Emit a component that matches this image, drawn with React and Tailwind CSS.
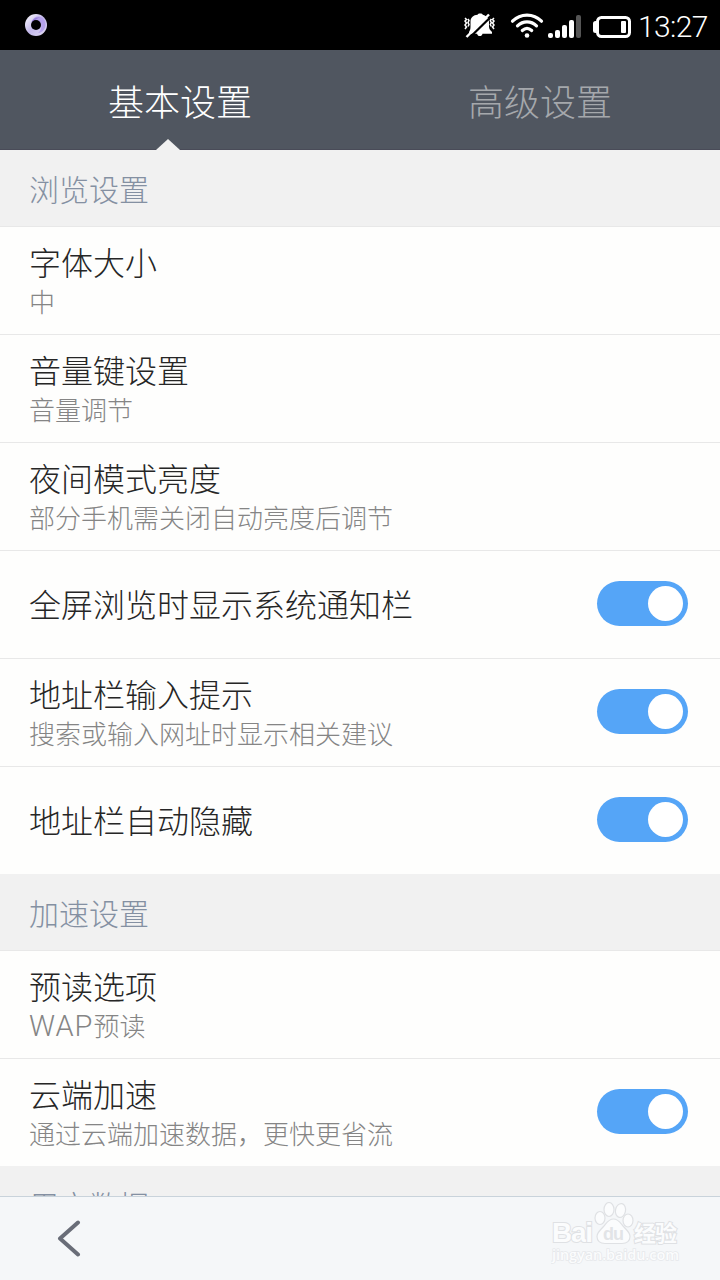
const SECTIONS = [
  {
    title: "浏览设置",
    items: [
      { title: "字体大小", desc: "中" },
      { title: "音量键设置", desc: "音量调节" },
      { title: "夜间模式亮度", desc: "部分手机需关闭自动亮度后调节" },
      { title: "全屏浏览时显示系统通知栏", toggle: true },
      { title: "地址栏输入提示", desc: "搜索或输入网址时显示相关建议", toggle: true },
      { title: "地址栏自动隐藏", toggle: true },
    ],
  },
  {
    title: "加速设置",
    items: [
      {
        title: "预读选项",
        desc: (
          <>
            <span className="font-[Roboto,sans-serif] text-[29px] tracking-[1px]">WAP</span>预读
          </>
        ),
      },
      { title: "云端加速", desc: "通过云端加速数据，更快更省流", toggle: true },
    ],
  },
  { title: "用户数据", items: [] },
];

function StatusBar() {
  return (
    <div className="flex h-[50px] shrink-0 items-center bg-black pl-[25px] text-white">
      <svg width="22" height="22" viewBox="0 0 22 22">
        <defs>
          <linearGradient id="ring" x1="0" y1="0" x2="1" y2="1">
            <stop offset="0" stopColor="#ffffff" />
            <stop offset="0.5" stopColor="#c3b8ea" />
            <stop offset="1" stopColor="#e2dcf4" />
          </linearGradient>
        </defs>
        <circle cx="11" cy="11" r="11" fill="url(#ring)" />
        <path d="M6.500 8C8 3 13 1 17 3.500c4 3 4.500 9 2 12-1.500 2-4 3.500-6 3.500 4-3 4-8 2-11-2-2-6-2.500-8.500 0z" fill="#b5a2ec" />
        <path d="M6.300 8.500C7.500 5 11 3 15 3.500c-2 .5-4 1.500-5 3.500z" fill="#9a82dd" />
        <circle cx="11" cy="11" r="5" fill="#000" />
      </svg>
      <div className="ml-auto flex items-center">
        {/* muted bell */}
        <svg width="32" height="26" viewBox="0 0 32 26">
          <path d="M16 1.500c1.600 0 2.500.5 2.800 1.300C23 4 25 6.500 25 10v4.500c0 2.500 1.500 4 3 5.500v1.700H18.500c-.3 1.500-1.300 2.300-2.700 2.300s-2.400-.8-2.700-2.300H5V20c1-1.500 1.500-3 1.500-5.500V9.500c0-4 3-6.500 7-6.700C14 2 14.700 1.500 16 1.500z" fill="#fff" />
          <path d="M4 27.200 27.500 4.200" stroke="#000" strokeWidth="2.200" />
          <path d="M2.500 25 25 2.500" stroke="#fff" strokeWidth="2.400" />
          <path d="M1 6l1.500 1.500L1 9l1.500 2L1 13l1.500 2L1 17M4 7l1 1.500L4 10.500l1 2-1 2M30 6l-1.500 1.500L30 9l-1.500 2 1.500 2-1.500 2 1.500 2M27.300 7l-1 1.500 1 2-1 2 1 2" stroke="#fff" strokeWidth="1.500" fill="none" />
        </svg>
        <svg className="ml-[14px]" width="34" height="26" viewBox="0 0 34 26" fill="none" stroke="#fff" strokeWidth="3.200" strokeLinecap="round">
          <path d="M2.500 9.200C10.500 1 23.500 1 31.500 9.200" />
          <path d="M7.500 13.900c5.500-5.300 13.500-5.300 19 0" />
          <path d="M12.300 18.500c2.900-2.600 6.500-2.600 9.400 0" />
          <circle cx="17" cy="23.500" r="2.300" fill="#fff" stroke="none" />
        </svg>
        <svg className="mt-[3px] ml-[4px]" width="34" height="24" viewBox="0 0 34 24" fill="#fff">
          <rect x="0" y="18" width="5" height="5" rx="2" />
          <rect x="7" y="15" width="5" height="8" rx="2" />
          <rect x="14" y="10" width="5" height="13" rx="2" />
          <rect x="21" y="5" width="5" height="18" rx="2" />
          <rect x="28" y="0" width="5" height="23" rx="2" fill="#555" />
        </svg>
        <svg className="mt-[4px] ml-[11px]" width="38" height="22" viewBox="0 0 38 22">
          <rect x="4.500" y="1.500" width="32" height="19" rx="4" fill="none" stroke="#fff" strokeWidth="3" />
          <rect x="0" y="5" width="5" height="12" rx="2.500" fill="#fff" />
          <rect x="28" y="5" width="5" height="12" rx="1" fill="#fff" />
        </svg>
        <span className="mt-[4px] ml-[7px] w-[82px] font-[Roboto,sans-serif] text-[30px] leading-none font-light tracking-[-0.6px]">13:27</span>
      </div>
    </div>
  );
}

function Tabs() {
  return (
    <div className="flex h-[100px] shrink-0 border-b border-[#494b58] bg-[#505660] text-[36px] leading-[100px]">
      <div className="relative w-1/2 text-center text-white">
        基本设置
        <svg className="absolute -bottom-px left-[156px]" width="24" height="11" viewBox="0 0 24 11">
          <path d="M0 11 12 0l12 11z" fill="#f1f1f1" />
        </svg>
      </div>
      <div className="w-1/2 text-center text-[#a5a8ac]">高级设置</div>
    </div>
  );
}

function Toggle() {
  return (
    <div className="flex h-[45px] w-[91px] items-center justify-end rounded-full bg-[#55a5f7] pr-[5px]">
      <div className="size-[35px] rounded-full bg-white" />
    </div>
  );
}

function Row({ title, desc, toggle }) {
  return (
    <div className="flex h-[108px] items-center justify-between border-b border-[#e8e8e8] bg-[#fefefd] pr-[32px] pb-[2px] pl-[29px] last:h-[107px] last:border-b-0">
      <div>
        <div className="pb-[2px] text-[32px] leading-[40px] text-[#262626]">{title}</div>
        {desc && <div className="h-[36px] text-[26px] leading-[36px] text-[#858585]">{desc}</div>}
      </div>
      {toggle && <Toggle />}
    </div>
  );
}

function Watermark() {
  return (
    <svg className="mb-[8px]" width="130" height="66" viewBox="0 0 130 66" fill="#fbfcfd" stroke="#dfe1e4" strokeWidth="1.200">
      <g fontWeight="700" paintOrder="stroke" strokeWidth="2">
        <text x="1" y="40" fontSize="28" textLength="41" fontFamily="Liberation Sans">Bai</text>
        <text x="83" y="39" fontSize="22" textLength="43" fontFamily="Noto Sans CJK SC">经验</text>
      </g>
      <ellipse cx="49" cy="16" rx="5" ry="6.500" />
      <ellipse cx="58" cy="7.500" rx="5" ry="7" />
      <ellipse cx="69.500" cy="8.500" rx="5" ry="7" transform="rotate(12 69.500 8.500)" />
      <ellipse cx="77" cy="18.500" rx="5" ry="6.500" />
      <path d="M62.500 17c5 0 7 4 10 7.500s6.500 6 6.500 10-3 7-8 7H54c-5 0-8-3-8-7s3.500-6.500 6.500-10 5-7.500 10-7.500z" />
      <text x="52" y="38" fontSize="18" fontWeight="700" textLength="21" fill="#e2e4e7" stroke="none" fontFamily="Liberation Sans">du</text>
      <text x="1" y="58" fontSize="14.500" textLength="127" fontFamily="Open Sans" fontWeight="600" paintOrder="stroke" stroke="#e6e8eb" strokeWidth="1.500">jingyan.baidu.com</text>
    </svg>
  );
}

export default function App() {
  return (
    <div className="flex h-[1280px] w-[720px] flex-col overflow-hidden bg-[#f1f1f1] font-['Noto_Sans_CJK_SC',sans-serif] font-light">
      <StatusBar />
      <Tabs />
      <div className="min-h-0 flex-1 overflow-hidden">
        {SECTIONS.map((section) => (
          <section key={section.title}>
            <h2 className="h-[77px] border-b border-[#e8e8e8] pl-[29px] text-[30px] leading-[76px] text-[#8490a2]">
              {section.title}
            </h2>
            <div>
              {section.items.map((item) => (
                <Row key={item.title} {...item} />
              ))}
            </div>
          </section>
        ))}
      </div>
      <div className="flex h-[84px] shrink-0 items-center justify-between border-t border-[#c9d3db] bg-[#f5f7f9] pr-[39px] pl-[57px]">
        <svg width="24" height="37" viewBox="0 0 24 37" fill="none" stroke="#696d78" strokeWidth="4" strokeLinecap="round" strokeLinejoin="round">
          <path d="M21 2.500 3 18.500l18 16" />
        </svg>
        <Watermark />
      </div>
    </div>
  );
}
